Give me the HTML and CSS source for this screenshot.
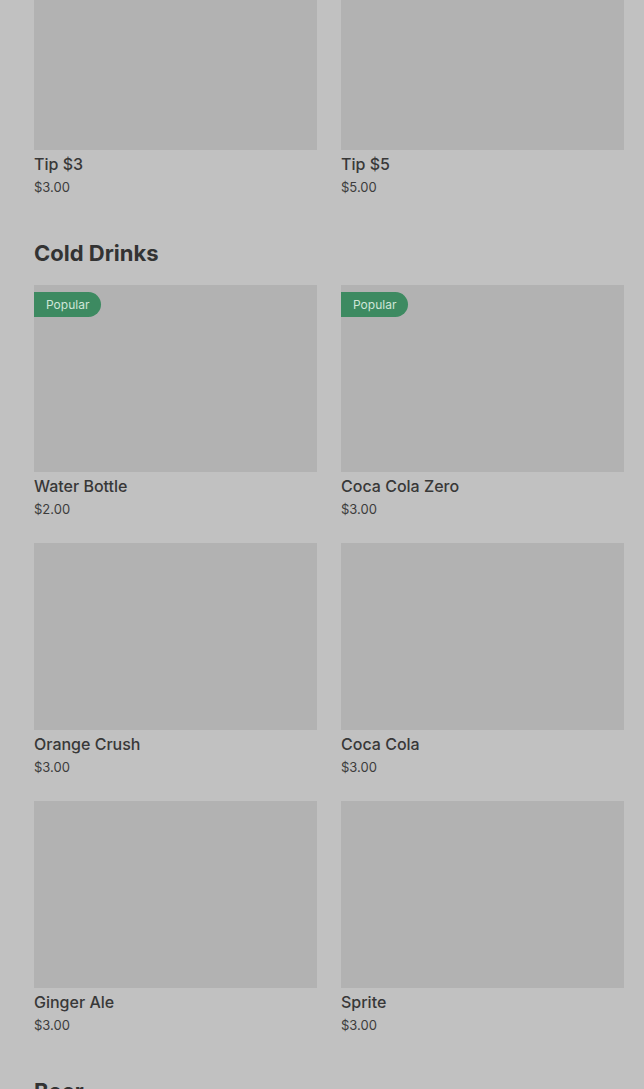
FILE: index.html
```html
<!DOCTYPE html>
<html lang="en">
<head>
    <meta charset="UTF-8">
    <meta name="viewport" content="width=device-width, initial-scale=1.0">
    <title>Menu</title>
    <link rel="stylesheet" href="styles.css">
</head>
<body>
    <main id="menu">
        <section class="menu-section scrolled">
            <div class="item-grid">
                <div class="item">
                    <div class="item-image"></div>
                    <h3>Tip $3</h3>
                    <p>$3.00</p>
                </div>
                <div class="item">
                    <div class="item-image"></div>
                    <h3>Tip $5</h3>
                    <p>$5.00</p>
                </div>
            </div>
        </section>

        <section class="menu-section">
            <h2>Cold Drinks</h2>
            <div class="item-grid">
                <div class="item">
                    <div class="item-image"><span class="badge">Popular</span></div>
                    <h3>Water Bottle</h3>
                    <p>$2.00</p>
                </div>
                <div class="item">
                    <div class="item-image"><span class="badge">Popular</span></div>
                    <h3>Coca Cola Zero</h3>
                    <p>$3.00</p>
                </div>
                <div class="item">
                    <div class="item-image"></div>
                    <h3>Orange Crush</h3>
                    <p>$3.00</p>
                </div>
                <div class="item">
                    <div class="item-image"></div>
                    <h3>Coca Cola</h3>
                    <p>$3.00</p>
                </div>
                <div class="item">
                    <div class="item-image"></div>
                    <h3>Ginger Ale</h3>
                    <p>$3.00</p>
                </div>
                <div class="item">
                    <div class="item-image"></div>
                    <h3>Sprite</h3>
                    <p>$3.00</p>
                </div>
            </div>
        </section>

        <section class="menu-section">
            <h2>Beer</h2>
        </section>
    </main>
</body>
</html>
```

FILE: styles.css
```css
body {
    font-family: Inter, "Noto Sans", Arial, sans-serif;
    margin: 0;
    padding: 0;
    background-color: #c1c1c1;
    color: #363636;
    overflow: hidden;
}

#menu {
    padding: 0 20px 0 34px;
}

/* page is scrolled a little past the top */
.scrolled {
    margin-top: -37px;
}

.menu-section {
    margin-bottom: 42px;
}

.menu-section h2 {
    font-size: 22px;
    font-weight: 700;
    letter-spacing: 0;
    line-height: 28px;
    margin: 0 0 18px;
    color: #333;
}

.item-grid {
    display: grid;
    grid-template-columns: 283px 283px;
    column-gap: 24px;
    row-gap: 24px;
}

.item-image {
    position: relative;
    height: 187px;
    background-color: #b2b2b2;
}

.badge {
    position: absolute;
    top: 7px;
    left: 0;
    height: 25px;
    line-height: 25px;
    padding: 0 12px;
    font-size: 12px;
    color: #cfe6d8;
    background-color: #3d8a61;
    border-radius: 0 13px 13px 0;
}

.item h3 {
    font-size: 16px;
    font-weight: 500;
    line-height: 20px;
    margin: 4px 0 3px;
    color: #383838;
}

.item p {
    font-size: 13px;
    line-height: 20px;
    margin: 0;
    color: #3c3c3c;
}
```
